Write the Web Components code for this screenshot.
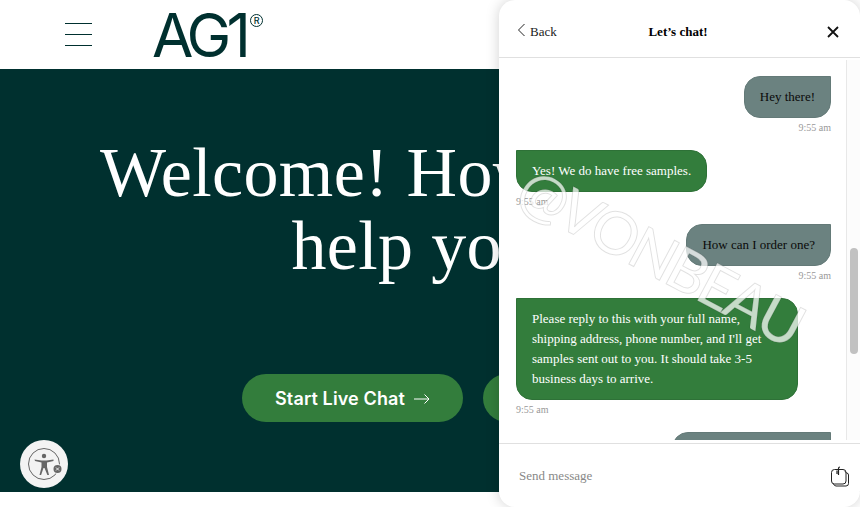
<!DOCTYPE html>
<html lang="en">
<head>
<meta charset="utf-8">
<title>AG1 chat</title>
<style>
  html, body { margin: 0; height: 100%; background: #fff; overflow: hidden; }
  body { position: relative; width: 860px; height: 507px; font-family: "Liberation Serif", serif; }
</style>
</head>
<body>
  <site-header></site-header>
  <hero-section>
    <cta-button>Start Live Chat</cta-button>
    <cta-button ghost></cta-button>
  </hero-section>
  <a11y-button></a11y-button>
  <chat-panel>
    <chat-bubble from="user" time="9:55 am">Hey there!</chat-bubble>
    <chat-bubble from="agent" time="9:55 am">Yes! We do have free samples.</chat-bubble>
    <chat-bubble from="user" time="9:55 am">How can I order one?</chat-bubble>
    <chat-bubble from="agent" time="9:55 am" wide>Please reply to this with your full name, shipping address, phone number, and I'll get samples sent out to you. It should take 3-5 business days to arrive.</chat-bubble>
    <chat-bubble from="user" stub></chat-bubble>
  </chat-panel>
  <water-mark>@VONBEAU</water-mark>

<script>
(function () {
  function define(name, css, html, extra) {
    class El extends HTMLElement {
      constructor() {
        super();
        this.attachShadow({ mode: "open" });
        this.shadowRoot.innerHTML = "<style>" + css + "</style>" + html;
      }
      connectedCallback() {
        if (extra) extra(this);
      }
    }
    customElements.define(name, El);
  }

  // ====== SITE ======
  define("site-header",
    ":host{display:flex;align-items:center;height:69px;background:#fff;padding-left:65px;box-sizing:border-box}" +
    ".burger{display:flex;flex-direction:column;gap:10px;width:27px}" +
    ".burger i{display:block;height:1px;background:#00302f}" +
    ".logo{display:flex;align-items:flex-start;margin-left:60px;color:#00302f;font-family:Inter,sans-serif}" +
    ".ag{font-size:60px;line-height:44px;height:44px;font-weight:400;letter-spacing:-4.8px}" +
    ".reg{width:11px;height:11px;border:1.500px solid #00302f;border-radius:50%;font-size:9px;font-weight:500;line-height:11px;text-align:center;margin:1px 0 0 4px}",
    '<div class="burger"><i></i><i></i><i></i></div>' +
    '<div class="logo"><span class="ag">AG1</span><span class="reg">R</span></div>');

  define("hero-section",
    ":host{display:flex;flex-direction:column;align-items:center;height:423px;background:#00302f;color:#fff;box-sizing:border-box;padding-top:67px}" +
    "h1{margin:0;font:400 70px/73px 'Liberation Serif',serif;letter-spacing:.35px;text-align:center;width:690px}" +
    ".actions{display:flex;gap:20px;margin-top:92px}",
    '<h1>Welcome! How can we help you?</h1><div class="actions"><slot></slot></div>');

  define("cta-button",
    ":host{display:inline-flex;align-items:center;height:48px;padding:1px 33px 0;border-radius:24px;background:#337d3c;color:#fff;font:600 18px/47px Inter,sans-serif;letter-spacing:.12px;box-sizing:border-box}" +
    ":host([ghost]){width:135px}" +
    ":host([ghost]) svg{display:none}" +
    "svg{margin-left:9px;display:block}",
    '<slot></slot><svg width="16" height="12" viewBox="0 0 16 12" fill="none" stroke="#fff" stroke-width="1"><path d="M0 6h15M10.500 1.500 15 6l-4.500 4.500"/></svg>');

  define("a11y-button",
    ":host{position:absolute;left:20px;top:440px;width:48px;height:48px;border-radius:50%;background:#f3f3f3;display:block}" +
    "svg{display:block}",
    '<svg width="48" height="48" viewBox="0 0 48 48" fill="none">' +
    '<circle cx="24" cy="24" r="15.500" stroke="#666" stroke-width="1"/>' +
    '<circle cx="24" cy="16" r="2.200" fill="#666"/>' +
    '<path d="M14.500 19.500 21.500 20.500h5l7-1v1.600l-6.500 1.300v4.600l2 8h-1.600L24.500 28h-1l-2.400 7h-1.600l2-8v-4.600l-6.500-1.300z" fill="#666"/>' +
    '<circle cx="37.500" cy="29" r="5" fill="#f3f3f3"/><circle cx="37.500" cy="29" r="4" fill="#666"/>' +
    '<path d="M36 27.500l3 3M39 27.500l-3 3" stroke="#eee" stroke-width="1"/></svg>');

  // ====== CHAT ======
  define("chat-panel",
    ":host{position:absolute;left:499px;top:0;width:361px;height:507px;background:#fff;border-radius:16px;box-shadow:0 0 14px rgba(0,0,0,.18);display:flex;flex-direction:column;font:13px/20px 'Liberation Serif',serif;overflow:hidden}" +
    "header{display:grid;grid-template-columns:1fr auto 1fr;align-items:center;height:58px;box-sizing:border-box;border-bottom:1px solid #e0e0e0;padding:7px 21px 0 18px;color:#222;flex:none}" +
    ".back{display:flex;align-items:center;gap:4px}" +
    ".back svg{margin-top:-4px}" +
    ".title{font-weight:700;color:#000}" +
    ".close{justify-self:end;display:block;margin-top:-1px}" +
    ".body{flex:1;display:flex;min-height:0;margin-bottom:3px}" +
    ".list{flex:1;overflow:hidden;padding:18px 15px 0 17px;min-width:0}" +
    ".rail{flex:none;width:8px;border-left:1px solid #e8e8e8;background:#fcfcfc;margin-top:2px;padding:0 2px 0 3px}" +
    ".thumb{margin-top:188px;width:8px;height:106px;border-radius:4px;background:#c1c1c1}" +
    "footer{flex:none;height:64px;box-sizing:border-box;border-top:1px solid #e0e0e0;display:flex;align-items:center;justify-content:space-between;padding:0 11px 0 20px;color:#888}" +
    "footer span{margin-top:1px}" +
    "footer svg{display:block;margin-top:2px}",
    '<header><div class="back"><svg width="9" height="14" viewBox="0 0 9 14" fill="none" stroke="#222" stroke-width="1"><path d="M7.500 1 1.500 7l6 6"/></svg>Back</div>' +
    '<div class="title">Let’s chat!</div>' +
    '<svg class="close" width="12" height="12" viewBox="0 0 12 12" fill="none" stroke="#111" stroke-width="1.800"><path d="M1 1l10 10M11 1 1 11"/></svg></header>' +
    '<div class="body"><div class="list"><slot></slot></div><div class="rail"><div class="thumb"></div></div></div>' +
    '<footer><span>Send message</span><svg width="19" height="21" viewBox="0 0 19 21" fill="none" stroke="#222" stroke-width="1"><path d="M15 5.500l1.500 1.500A2 2 0 0 1 18.500 9v8.500a2.500 2.500 0 0 1-2.500 2.500H6A3 3 0 0 1 3.500 18"/><rect x="1.500" y="3.500" width="14.500" height="14.500" rx="3"/><path d="M8.500 9V2.500A1.500 1.500 0 0 1 10 1M7 4.500V8" stroke-width="1.200"/></svg></footer>');

  define("chat-bubble",
    ":host{display:flex;flex-direction:column;align-items:flex-start;margin-bottom:16px}" +
    ":host([from=user]){align-items:flex-end}" +
    ".msg{box-sizing:border-box;padding:10px 15px;border:1px solid #2e7137;border-radius:0 16px 16px 16px;background:#337d3c;color:#fff;min-height:42px}" +
    ":host([from=user]) .msg{background:#6b8280;border-color:#647a78;color:#0a0a0a;border-radius:16px 0 16px 16px}" +
    ":host([wide]) .msg{width:282px}" +
    ":host([stub]) .msg{width:159px;height:60px}" +
    ".time{font-size:10px;line-height:12px;margin-top:4px;color:#999}",
    '<div class="msg"><slot></slot></div><div class="time"></div>',
    function (el) {
      el.shadowRoot.querySelector(".time").textContent = el.getAttribute("time") || "";
    });

  define("water-mark",
    ":host{position:absolute;left:505px;top:226px;transform:rotate(28deg);transform-origin:center;pointer-events:none;display:block;font:500 59px/60px Lato,sans-serif;letter-spacing:-3px;color:rgba(255,255,255,.72);-webkit-text-stroke:1px rgba(0,0,0,.12);white-space:nowrap}",
    "<slot></slot>");
})();
</script>
</body>
</html>
